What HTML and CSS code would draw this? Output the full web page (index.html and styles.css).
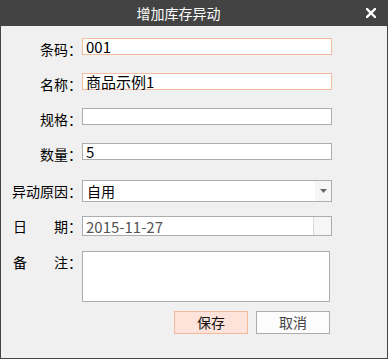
FILE: index.html
```html
<!DOCTYPE html>
<html lang="zh-CN">
<head>
<meta charset="utf-8">
<title>增加库存异动</title>
<link rel="stylesheet" href="styles.css">
</head>
<body>
<div class="window">
  <div class="titlebar">
    <div class="title">增加库存异动</div>
    <svg class="close" width="10" height="10" viewBox="0 0 10 10"><path d="M1 1 L9 9 M9 1 L1 9" stroke="#fff" stroke-width="2.4" stroke-linecap="square"/></svg>
  </div>
  <div class="content">
    <div class="row r1"><div class="lbl">条码：</div><div class="field text focus">001</div></div>
    <div class="row r2"><div class="lbl">名称：</div><div class="field text focus">商品示例1</div></div>
    <div class="row r3"><div class="lbl">规格：</div><div class="field text"></div></div>
    <div class="row r4"><div class="lbl">数量：</div><div class="field text">5</div></div>
    <div class="row r5"><div class="lbl">异动原因：</div><div class="field select"><span class="val">自用</span><span class="arrowbox"><svg width="7" height="4" viewBox="0 0 7 4"><path d="M0 0 H7 L3.5 4 Z" fill="#666"/></svg></span></div></div>
    <div class="row r6"><div class="lbl just"><span>日</span><span>期：</span></div><div class="field date"><span class="val">2015-11-27</span><span class="datebtn"></span></div></div>
    <div class="row r7"><div class="lbl just top"><span>备</span><span>注：</span></div><div class="field memo"></div></div>
    <div class="buttons"><div class="btn save">保存</div><div class="btn cancel">取消</div></div>
  </div>
</div>
</body>
</html>
```
FILE: styles.css
```css
* { box-sizing: border-box; }
html, body { margin: 0; padding: 0; }
body {
  width: 388px;
  height: 359px;
  background: #f0f0f0;
  font-family: "Noto Sans CJK SC", "Noto Sans", sans-serif;
  font-size: 14px;
  color: #000;
}
.window {
  width: 388px;
  height: 359px;
  border-left: 1px solid #444;
  border-right: 1px solid #444;
  border-bottom: 1px solid #444;
  background: #f0f0f0;
  display: flex;
  flex-direction: column;
}
.titlebar {
  height: 26px;
  margin: 0 -1px;
  background: #434343;
  display: flex;
  align-items: center;
}
.title {
  width: 357px;
  text-align: center;
  color: #fff;
  font-size: 14px;
  line-height: 26px;
}
.close { margin-left: 9px; display: block; }
.content {
  display: flex;
  flex-direction: column;
  padding-top: 12px;
}
.row {
  display: flex;
  align-items: flex-start;
  height: 22px;
}
.r2, .r3, .r4 { margin-top: 13px; }
.r5 { margin-top: 15px; }
.r6 { margin-top: 14px; height: 20px; }
.r7 { margin-top: 15px; height: 51px; }
.lbl {
  width: 69px;
  margin-left: 12px;
  height: 22px;
  line-height: 22px;
  display: flex;
  justify-content: flex-end;
  white-space: nowrap;
}
.lbl.just { justify-content: space-between; }
.r6 .lbl { height: 20px; line-height: 20px; }
.lbl.top { line-height: 14px; padding-top: 4px; height: auto; }
.field {
  width: 250px;
  background: #fff;
  border: 1px solid #adadad;
}
.field.text {
  height: 17px;
  font-size: 15px;
  line-height: 15px;
  padding-left: 3px;
}
.field.focus { border-color: #f4bc9f; }
.field.select {
  height: 22px;
  display: flex;
  align-items: center;
  padding-left: 4px;
  font-size: 14px;
}
.val { flex: 1; }
.arrowbox {
  width: 16px;
  height: 20px;
  background: #f6f6f6;
  display: flex;
  align-items: center;
  justify-content: center;
}
.arrowbox svg { display: block; }
.field.date {
  height: 20px;
  display: flex;
  align-items: center;
  padding-left: 3px;
  color: #555;
  font-size: 15px;
}
.datebtn {
  width: 18px;
  height: 18px;
  background: #f6f6f6;
  border-left: 1px solid #d8d8d8;
}
.field.memo {
  width: 248px;
  height: 51px;
}
.buttons {
  display: flex;
  margin-top: 9px;
  margin-left: 173px;
  gap: 8px;
}
.btn {
  height: 23px;
  line-height: 21px;
  text-align: center;
  font-size: 14px;
}
.btn.save {
  width: 74px;
  background: #fde3da;
  border: 1px solid #f4b89b;
  color: #111;
}
.btn.cancel {
  width: 74px;
  background: #fcfcfc;
  border: 1px solid #adadad;
  color: #444;
}
```
